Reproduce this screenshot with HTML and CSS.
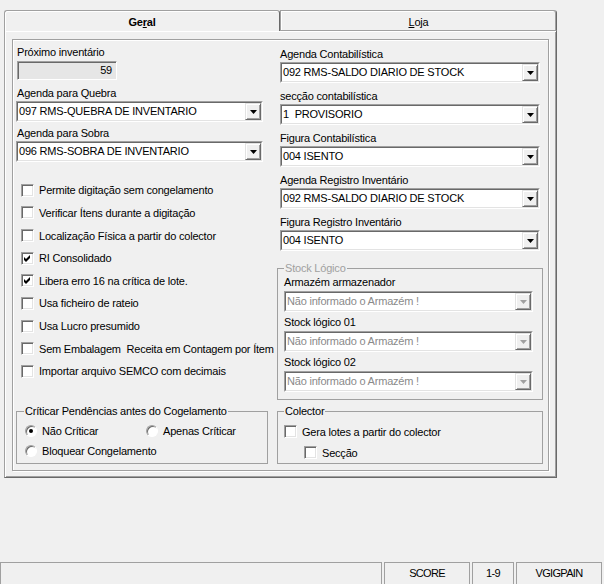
FILE: index.html
```html
<!DOCTYPE html>
<html lang="pt">
<head>
<meta charset="utf-8">
<title>Inventário</title>
<link rel="stylesheet" href="styles.css">
</head>
<body>
<div class="tabctl">
  <div class="tabstrip">
    <div class="tab tab-on">Ge<u>r</u>al</div>
    <div class="tab tab-off"><u>L</u>oja</div>
  </div>
  <div class="panel">
    <div class="frame">
      <div class="cols">
        <div class="col-left">
          <span class="lbl">Próximo inventário</span>
          <div class="numbox">59</div>
          <span class="lbl">Agenda para Quebra</span>
          <div class="combo"><div class="combo-in"><span class="val">097 RMS-QUEBRA DE INVENTARIO</span><span class="btn"><svg width="7" height="4" viewBox="0 0 7 4"><path d="M0 0H7L3.5 4Z" fill="#000"/></svg></span></div></div>
          <span class="lbl">Agenda para Sobra</span>
          <div class="combo"><div class="combo-in"><span class="val">096 RMS-SOBRA DE INVENTARIO</span><span class="btn"><svg width="7" height="4" viewBox="0 0 7 4"><path d="M0 0H7L3.5 4Z" fill="#000"/></svg></span></div></div>
          <div class="checks">
            <div class="chk"><span class="cb"></span>Permite digitação sem congelamento</div>
            <div class="chk"><span class="cb"></span>Verificar Ítens durante a digitação</div>
            <div class="chk"><span class="cb"></span>Localização Física a partir do colector</div>
            <div class="chk"><span class="cb"><svg width="7" height="7" viewBox="0 0 7 7"><path d="M0 2L2 4L6 0V3L2 7L0 5Z" fill="#000"/></svg></span>RI Consolidado</div>
            <div class="chk"><span class="cb"><svg width="7" height="7" viewBox="0 0 7 7"><path d="M0 2L2 4L6 0V3L2 7L0 5Z" fill="#000"/></svg></span>Libera erro 16 na crítica de lote.</div>
            <div class="chk"><span class="cb"></span>Usa ficheiro de rateio</div>
            <div class="chk"><span class="cb"></span>Usa Lucro presumido</div>
            <div class="chk"><span class="cb"></span>Sem Embalagem&nbsp; Receita em Contagem por Ítem</div>
            <div class="chk"><span class="cb"></span>Importar arquivo SEMCO com decimais</div>
          </div>
        </div>
        <div class="col-right">
          <span class="lbl">Agenda Contabilística</span>
          <div class="combo"><div class="combo-in"><span class="val">092 RMS-SALDO DIARIO DE STOCK</span><span class="btn"><svg width="7" height="4" viewBox="0 0 7 4"><path d="M0 0H7L3.5 4Z" fill="#000"/></svg></span></div></div>
          <span class="lbl">secção contabilística</span>
          <div class="combo"><div class="combo-in"><span class="val">1&nbsp; PROVISORIO</span><span class="btn"><svg width="7" height="4" viewBox="0 0 7 4"><path d="M0 0H7L3.5 4Z" fill="#000"/></svg></span></div></div>
          <span class="lbl">Figura Contabilística</span>
          <div class="combo"><div class="combo-in"><span class="val">004 ISENTO</span><span class="btn"><svg width="7" height="4" viewBox="0 0 7 4"><path d="M0 0H7L3.5 4Z" fill="#000"/></svg></span></div></div>
          <span class="lbl">Agenda Registro Inventário</span>
          <div class="combo"><div class="combo-in"><span class="val">092 RMS-SALDO DIARIO DE STOCK</span><span class="btn"><svg width="7" height="4" viewBox="0 0 7 4"><path d="M0 0H7L3.5 4Z" fill="#000"/></svg></span></div></div>
          <span class="lbl">Figura Registro Inventário</span>
          <div class="combo"><div class="combo-in"><span class="val">004 ISENTO</span><span class="btn"><svg width="7" height="4" viewBox="0 0 7 4"><path d="M0 0H7L3.5 4Z" fill="#000"/></svg></span></div></div>
          <fieldset class="grp stock">
            <legend class="disabled-legend">Stock Lógico</legend>
            <span class="lbl">Armazém armazenador</span>
            <div class="combo combo-dis"><div class="combo-in"><span class="val">Não informado o Armazém !</span><span class="btn"><svg width="7" height="4" viewBox="0 0 7 4"><path d="M0 0H7L3.5 4Z" fill="#a0a0a0"/></svg></span></div></div>
            <span class="lbl">Stock lógico 01</span>
            <div class="combo combo-dis"><div class="combo-in"><span class="val">Não informado o Armazém !</span><span class="btn"><svg width="7" height="4" viewBox="0 0 7 4"><path d="M0 0H7L3.5 4Z" fill="#a0a0a0"/></svg></span></div></div>
            <span class="lbl">Stock lógico 02</span>
            <div class="combo combo-dis"><div class="combo-in"><span class="val">Não informado o Armazém !</span><span class="btn"><svg width="7" height="4" viewBox="0 0 7 4"><path d="M0 0H7L3.5 4Z" fill="#a0a0a0"/></svg></span></div></div>
          </fieldset>
        </div>
      </div>
      <div class="bottom">
        <fieldset class="grp crit">
          <legend>Críticar Pendências antes do Cogelamento</legend>
          <div class="radios">
            <div class="rad"><span class="rb on"></span>Não Críticar</div>
            <div class="rad"><span class="rb"></span>Apenas Críticar</div>
            <div class="rad"><span class="rb"></span>Bloquear Congelamento</div>
          </div>
        </fieldset>
        <fieldset class="grp colector">
          <legend>Colector</legend>
          <div class="chk2"><span class="cb"></span>Gera lotes a partir do colector</div>
          <div class="chk2 sub"><span class="cb"></span>Secção</div>
        </fieldset>
      </div>
    </div>
  </div>
</div>
<div class="statusbar">
  <div class="sp sp-main"></div>
  <div class="sp sp-score">SCORE</div>
  <div class="sp sp-num">1-9</div>
  <div class="sp sp-user">VGIGPAIN</div>
</div>
</body>
</html>
```
FILE: styles.css
```css
* { box-sizing: border-box; }
html, body { margin: 0; height: 100%; }
body {
  background: #f0f0f0;
  font-family: "Liberation Sans", Arial, sans-serif;
  font-size: 11px;
  letter-spacing: -0.2px;
  color: #000;
  display: flex;
  flex-direction: column;
  overflow: hidden;
}
u { text-decoration: underline; text-underline-offset: 1px; }

/* tab control */
.tabctl { margin: 10px 0 0 4px; width: 553px; }
.tabstrip { display: flex; height: 20px; }
.tab {
  display: flex;
  justify-content: center;
  padding-top: 5px;
  line-height: 13px;
  background: #f0f0f0;
  border-top: 1px solid #a0a0a0;
}
.tab-on {
  width: 276px;
  height: 21px;
  margin-bottom: -1px;
  position: relative;
  z-index: 1;
  font-weight: bold;
  border-left: 1px solid #a0a0a0;
  border-right: 1px solid #696969;
  border-top-left-radius: 3px;
  border-top-right-radius: 3px;
  box-shadow: inset 1px 1px #fff;
}
.tab-off {
  flex: 1;
  height: 20px;
  border-left: 1px solid #a0a0a0;
  border-right: 1px solid #696969;
  border-top-right-radius: 3px;
  box-shadow: inset -1px 0 #a0a0a0, inset 1px 1px #fff;
}
.panel {
  height: 448px;
  border: 1px solid #a0a0a0;
  border-right-color: #696969;
  border-bottom-color: #696969;
  box-shadow: inset 1px 1px #fff, inset -1px -1px #a0a0a0;
  padding: 8px 7px 6px 7px;
}
.frame {
  height: 100%;
  border: 1px solid #a0a0a0;
  box-shadow: inset 1px 1px #fff, 1px 1px #fff;
}
.cols { display: flex; }
.col-left { width: 250px; padding: 6px 0 0 4px; }
.col-right { width: 266px; margin-left: 14px; padding-top: 8px; }

.lbl { display: block; line-height: 13px; margin-bottom: 1px; white-space: nowrap; }
.col-right > .lbl, .col-right > .combo { margin-left: 3px; }
.col-right > .combo { width: 260px; margin-bottom: 7px; }
.col-left > .combo { width: 247px; margin-left: -1px; margin-bottom: 5px; }

.numbox {
  width: 100px;
  height: 19px;
  margin: 2px 0 7px;
  border: 1px solid;
  border-color: #a0a0a0 #fff #fff #a0a0a0;
  background: #e6e6e6;
  box-shadow: inset 1px 1px #696969;
  text-align: right;
  padding-right: 4px;
  line-height: 17px;
}

/* combobox */
.combo {
  height: 21px;
  border: 1px solid;
  border-color: #a0a0a0 #fff #fff #a0a0a0;
  background: #fff;
}
.combo-in {
  height: 100%;
  display: flex;
  border: 1px solid;
  border-color: #696969 #e3e3e3 #e3e3e3 #696969;
}
.val { flex: 1; padding-left: 1px; line-height: 17px; white-space: nowrap; overflow: hidden; }
.btn {
  width: 16px;
  height: 17px;
  flex: none;
  background: #f0f0f0;
  border: 1px solid;
  border-color: #e3e3e3 #696969 #696969 #e3e3e3;
  box-shadow: inset 1px 1px #fff, inset -1px -1px #a0a0a0;
  display: flex;
  align-items: center;
  justify-content: center;
}
.combo-dis .val { color: #8a8a8a; }

/* checkboxes */
.checks { margin-top: 17px; padding-left: 4px; }
.chk { height: 22.625px; display: flex; align-items: center; gap: 5px; white-space: nowrap; }
.cb {
  width: 13px;
  height: 13px;
  flex: none;
  border: 1px solid;
  border-color: #a0a0a0 #fff #fff #a0a0a0;
  background: #fff;
  box-shadow: inset 1px 1px #696969, inset -1px -1px #e3e3e3;
  display: flex;
  align-items: center;
  justify-content: center;
}

/* group boxes */
.grp { margin: 0; padding: 0; border: 1px solid #a0a0a0; min-width: 0; }
.grp legend { padding: 0 1px; line-height: 13px; }
.disabled-legend { color: #a0a0a0; }
.stock { width: 266px; margin-top: 11px; padding: 1px 0 7px 6px; }
.stock .lbl { margin-bottom: 2px; }
.stock .combo { width: 249px; margin-bottom: 4px; }
.stock .combo:last-child { margin-bottom: 0; }

.bottom { display: flex; gap: 9px; margin: 5px 0 0 3px; }
.crit { width: 252px; padding: 3px 0 2px 8px; }
.crit legend { margin-left: -1px; }
.colector { width: 266px; padding: 3px 0 0 6px; }
.radios { display: grid; grid-template-columns: 121px auto; }
.rad { height: 20px; display: flex; align-items: center; gap: 5px; white-space: nowrap; }
.rb {
  width: 12px;
  height: 12px;
  flex: none;
  border-radius: 50%;
  background: #fff;
  border: 1px solid;
  border-color: #a0a0a0 #fff #fff #a0a0a0;
  box-shadow: inset 1px 1px #696969;
  display: flex;
  align-items: center;
  justify-content: center;
}
.rb.on::after { content: ""; width: 4px; height: 4px; border-radius: 50%; background: #000; }
.chk2 { height: 21px; display: flex; align-items: center; gap: 5px; white-space: nowrap; }
.chk2.sub { margin-left: 20px; }

/* status bar */
.statusbar { margin-top: auto; display: flex; gap: 2px; height: 22px; }
.sp {
  border: 1px solid #a0a0a0;
  border-bottom: none;
  line-height: 21px;
  text-align: center;
  font-size: 11px;
  letter-spacing: -0.7px;
}
.sp-main { width: 382px; }
.sp-score { width: 86px; }
.sp-num { width: 42px; }
.sp-user { width: 86px; }
```
